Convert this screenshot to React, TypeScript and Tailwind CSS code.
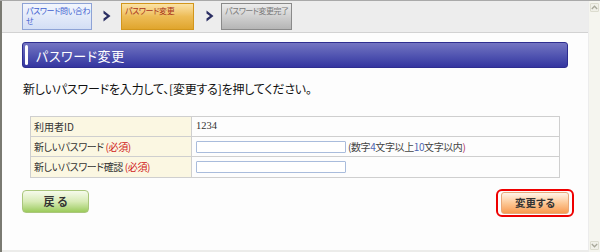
import React from "react";

const jp = { fontFamily: '"Noto Sans CJK JP", "Noto Sans", sans-serif', fontFeatureSettings: '"palt"' };

function Arrow() {
  return (
    <svg width="8" height="12" viewBox="0 0 8 12" className="shrink-0">
      <path d="M0.5 0.5 L7.5 6 L0.5 11.5 L0.5 8.5 L4 6 L0.5 3.5 Z" fill="#2b2f63" />
    </svg>
  );
}

function Chevron({ up }: { up?: boolean }) {
  return (
    <svg width="7" height="5" viewBox="0 0 7 5">
      <path d={up ? "M0.8 4 L3.5 1.2 L6.2 4" : "M0.8 1 L3.5 3.8 L6.2 1"} fill="none" stroke="#a8a89a" strokeWidth="1.3" />
    </svg>
  );
}

export default function App() {
  return (
    <div className="w-[600px] h-[252px] overflow-hidden flex flex-col bg-[#fdfdfd]" style={jp}>
      <div className="h-px bg-[#a9a9a9] shrink-0" />
      <div className="flex flex-1 min-h-0">
        <div className="w-[2px] bg-[#7a7a72] shrink-0" />
        <div className="flex-1 flex flex-col min-w-0">
          {/* header steps */}
          <div className="h-[32px] shrink-0 bg-[#ededed] border-b border-[#d2d2d2] pl-[20px] pt-[2px] flex items-start">
            <div className="w-[70px] h-[27px] border border-[#8ea3d6] bg-gradient-to-b from-[#f3f6fd] to-[#d3def5] text-[#3f5fd0] text-[8px] leading-[10px] pl-[3px] pr-0 pt-[2px] break-all tracking-[-0.4px]">
              パスワード問い合わせ
            </div>
            <div className="ml-[11px] mr-[10px] mt-[7px]"><Arrow /></div>
            <div className="w-[73px] h-[27px] border border-[#d2961c] bg-gradient-to-b from-[#fbe3a6] via-[#edbc55] to-[#e0a52c] text-[#a8331a] text-[8px] leading-[10px] px-[3px] pt-[2px] tracking-[-0.4px]">
              パスワード変更
            </div>
            <div className="ml-[12px] mr-[7px] mt-[7px]"><Arrow /></div>
            <div className="w-[71px] h-[27px] border border-[#8a8a8a] bg-gradient-to-b from-[#ececec] to-[#b5b5b5] text-[#7a7a7a] text-[8px] leading-[10px] px-[3px] pt-[2px] tracking-[-0.5px] whitespace-nowrap overflow-hidden">
              パスワード変更完了
            </div>
          </div>

          {/* content */}
          <div className="flex-1 px-[20px] pt-[9px] flex flex-col">
            <div className="h-[26px] rounded-[3px] border border-[#2e2e90] bg-gradient-to-b from-[#7474c2] to-[#3535a0] flex items-center pl-[2px]">
              <div className="w-[3px] h-[20px] rounded-[2px] bg-white" />
              <span className="ml-[8px] text-white text-[13px] tracking-[0.6px] leading-none">パスワード変更</span>
            </div>

            <p className="mt-[13px] ml-[1px] text-[12px] leading-[15px] text-[#111] tracking-[-0.2px]">
              新しいパスワードを入力して、[変更する]を押してください。
            </p>

            <table className="mt-[20px] ml-[8px] w-[530px] border-collapse border border-[#c4c4c4] text-[10px] text-[#333]">
              <tbody>
                <tr className="h-[20px]">
                  <td className="w-[161px] bg-[#fbf7e2] border border-[#cfcfcf] px-[3px] leading-none">利用者ID</td>
                  <td className="border border-[#cfcfcf] px-[4px] leading-none text-[10.5px]" style={{ fontFamily: '"Liberation Serif", serif' }}>1234</td>
                </tr>
                <tr className="h-[20px]">
                  <td className="bg-[#fbf7e2] border border-[#cfcfcf] px-[3px] leading-none tracking-[-0.4px]">
                    新しいパスワード <span className="text-[#d02020]">(必須)</span>
                  </td>
                  <td className="border border-[#cfcfcf] px-[4px] leading-none">
                    <div className="flex items-center">
                      <div className="w-[150px] h-[12px] border border-[#a9bcdc] bg-white rounded-[1px]" />
                      <span className="ml-[2px] text-[10px] text-[#444] tracking-[-0.4px]">(数字<span className="text-[#5066b0]">4</span>文字以上<span className="text-[#5066b0]">10</span>文字以内<span className="text-[#b03060]">)</span></span>
                    </div>
                  </td>
                </tr>
                <tr className="h-[21px]">
                  <td className="bg-[#fbf7e2] border border-[#cfcfcf] px-[3px] leading-none tracking-[-0.4px]">
                    新しいパスワード確認 <span className="text-[#d02020]">(必須)</span>
                  </td>
                  <td className="border border-[#cfcfcf] px-[4px] leading-none">
                    <div className="w-[150px] h-[12px] border border-[#a9bcdc] bg-white rounded-[1px]" />
                  </td>
                </tr>
              </tbody>
            </table>

            <div className="mt-[11px] flex justify-between items-start">
              <div className="mt-[1px] w-[67px] h-[23px] rounded-[4px] border border-[#aac67c] bg-gradient-to-b from-[#f6fbec] via-[#d8ebb6] to-[#9ccb5a] flex items-center justify-center text-[11px] font-bold text-[#333] tracking-[3px] pl-[3px]">
                戻る
              </div>
              <div className="mr-[-6px] border-2 border-[#ee0000] rounded-[6px] px-[3px] py-[1px]">
                <div className="w-[68px] h-[22px] rounded-[3px] border border-[#e8a878] bg-gradient-to-b from-[#fff4e8] via-[#fcc896] to-[#f79a4e] flex items-center justify-center text-[10.5px] font-bold text-[#333]">
                  変更する
                </div>
              </div>
            </div>
          </div>
          <div className="h-[2px] bg-[#ececea] shrink-0" />
        </div>
        {/* scrollbar */}
        <div className="w-[12px] shrink-0 bg-[#f5f5ef] border-l border-[#ececec] flex flex-col justify-between items-center pt-[2px] pb-[2px]">
          <div className="w-[9px] h-[9px] border border-[#dcdccf] rounded-[1px] bg-[#f0f0e8] flex items-center justify-center"><Chevron up /></div>
          <div className="w-[9px] h-[9px] border border-[#dcdccf] rounded-[1px] bg-[#f0f0e8] flex items-center justify-center"><Chevron /></div>
        </div>
      </div>
    </div>
  );
}
